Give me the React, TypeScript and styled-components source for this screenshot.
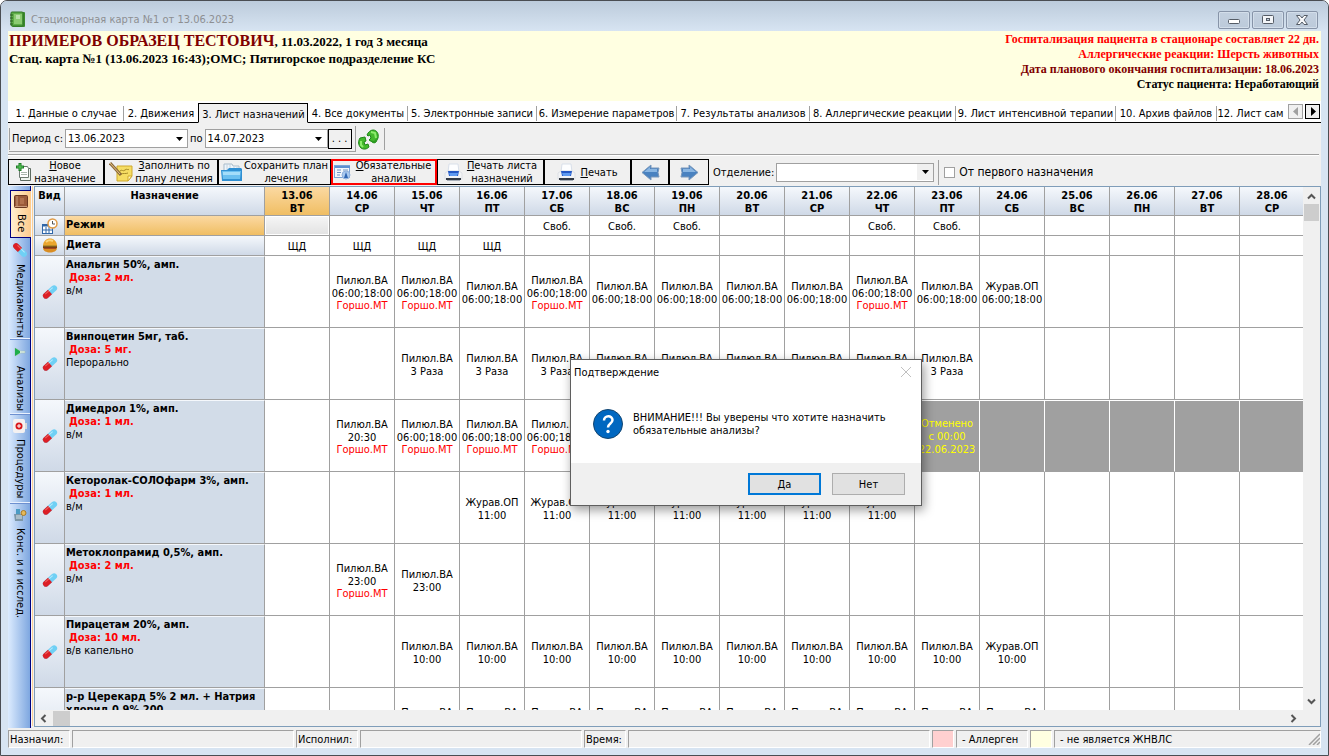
import React from 'react';
import styled, { createGlobalStyle, css } from 'styled-components';

const ui = '"DejaVu Sans Condensed", "DejaVu Sans", sans-serif';

const GlobalStyle = createGlobalStyle`
  * { box-sizing: border-box; }
  body { margin: 0; font: 11px/13px ${ui}; color: #000; background: #fff; }
  button, input, select { font: inherit; color: inherit; margin: 0; padding: 0; border: 0; border-radius: 0; background: none; }
  svg { display: block; flex: none; }
`;

/* ---------- window frame ---------- */

const Frame = styled.div`
  position: relative;
  display: flex;
  flex-direction: column;
  height: 100vh;
  border: 1px solid #4a4d52;
  border-radius: 7px 7px 0 0;
  background: #d7e4f2;
  padding: 0 7px 7px;
  overflow: hidden;
`;

const TitleBar = styled.header`
  display: flex;
  align-items: center;
  gap: 5px;
  height: 30px;
  flex: none;
  margin: 0 -7px;
  padding: 7px 10px 0 9px;
  background: linear-gradient(#bccbdb, #d7e4f2);
  color: #8d8f92;
`;

const Title = styled.h1`
  flex: 1;
  margin: 0;
  font-size: 11px;
  font-weight: 400;
`;

const FrameButtons = styled.div`
  display: flex;
  gap: 2px;
`;

const FrameButton = styled.button`
  display: grid;
  place-items: center;
  width: 32px;
  height: 18px;
  border: 1px solid #8794a8;
  border-radius: 2px;
  box-shadow: inset 0 0 0 1px #d3deea;
  background: linear-gradient(#c3d0df, #bccada);
`;

/* ---------- patient header ---------- */

const Patient = styled.section`
  display: flex;
  justify-content: space-between;
  height: 70px;
  flex: none;
  padding: 1px 2px 0 1px;
  background: #ffffe1;
  font: bold 12px/15px "Liberation Serif", serif;
`;

const PatientName = styled.div`
  font-size: 13px;
  line-height: 18px;
  strong { font-size: 16px; color: #800000; }
`;

const PatientCard = styled.div`
  font-size: 13px;
  line-height: 15px;
`;

const Notices = styled.div`
  text-align: right;
`;

const Notice = styled.div<{ $color: string }>`
  color: ${(p) => p.$color};
`;

/* ---------- tabs ---------- */

const TabBar = styled.nav`
  display: flex;
  align-items: flex-end;
  height: 22px;
  flex: none;
  background: #fff;
`;

const TabList = styled.div`
  display: flex;
  align-items: flex-end;
  flex: 1;
  min-width: 0;
  overflow: hidden;
`;

const Tab = styled.button<{ $width: number; $active?: boolean; $line?: boolean }>`
  flex: none;
  width: ${(p) => p.$width}px;
  height: 20px;
  padding-top: 2px;
  white-space: nowrap;
  border-bottom: 1px solid #000;
  ${(p) =>
    p.$active &&
    css`
      border: 1px solid #000;
      border-bottom-color: #f0f0f0;
      background: #f0f0f0;
    `}
  span {
    display: block;
    border-left: 1px solid ${(p) => (p.$line ? '#a0a0a0' : 'transparent')};
    line-height: 15px;
  }
`;

const TabFiller = styled.div`
  flex: 1;
  border-bottom: 1px solid #000;
`;

const TabScroll = styled.div`
  display: flex;
  gap: 2px;
  height: 22px;
  padding: 3px 1px 0 4px;
  border-bottom: 1px solid #000;
`;

const TabScrollButton = styled.button<{ $off?: boolean }>`
  display: grid;
  place-items: center;
  width: 15px;
  height: 15px;
  border: 1px solid ${(p) => (p.$off ? '#a0a0a0' : '#000')};
  background: #f0f0f0;
  color: ${(p) => (p.$off ? '#a0a0a0' : '#000')};
`;

/* ---------- toolbars ---------- */

const Work = styled.main`
  display: flex;
  flex-direction: column;
  flex: 1;
  min-height: 0;
  background: #f0f0f0;
`;

const PeriodBar = styled.div`
  display: flex;
  align-items: center;
  height: 32px;
  flex: none;
  margin-right: 2px;
  padding: 1px 0 0 1px;
  border-bottom: 1px solid #a0a0a0;
  box-shadow: 0 1px #fff;
`;

const PeriodGroup = styled.div`
  display: flex;
  align-items: center;
  gap: 2px;
  height: 26px;
  padding: 0 3px 0 0;
  border-right: 1px solid #a0a0a0;
  border-bottom: 1px solid #a0a0a0;
`;

const Joined = styled.span`
  display: flex;
  align-items: center;
`;

const Divider = styled.span<{ $height: number }>`
  width: 1px;
  height: ${(p) => p.$height}px;
  background: #a0a0a0;
`;

const Field = styled.span<{ $width: number; $height: number }>`
  display: flex;
  align-items: center;
  width: ${(p) => p.$width}px;
  height: ${(p) => p.$height}px;
  border: 1px solid #a0a0a0;
  background: #fff;
  input,
  select {
    flex: 1;
    min-width: 0;
    height: 100%;
    padding-left: 2px;
    appearance: none;
    outline: 0;
  }
`;

const DropButton = styled.button<{ $shaded?: boolean }>`
  display: grid;
  place-items: center;
  width: 16px;
  height: 16px;
  background: ${(p) => (p.$shaded ? '#f0f0f0' : '#fff')};
`;

const Dots = styled.button`
  width: 24px;
  height: 20px;
  border: 1px solid #000;
`;

const RefreshButton = styled.button`
  margin: 0 5px 0 2px;
`;

const ActionBar = styled.div`
  display: flex;
  align-items: center;
  height: 31px;
  flex: none;
  padding: 4px 0 1px;
`;

const Action = styled.button<{ $width: number; $marked?: boolean; $tight?: boolean }>`
  display: flex;
  align-items: center;
  justify-content: center;
  gap: ${(p) => (p.$tight ? 4 : 2)}px;
  flex: none;
  width: ${(p) => p.$width}px;
  height: 26px;
  padding: 0 ${(p) => (p.$marked ? 1 : 4)}px;
  border: ${(p) => (p.$marked ? '2px solid #f00' : '1px solid #000')};
  overflow: hidden;
`;

const ActionText = styled.span<{ $fill?: boolean }>`
  flex: ${(p) => (p.$fill ? 1 : 'none')};
  line-height: 13px;
  white-space: nowrap;
`;

const DeptLabel = styled.label`
  display: flex;
  align-items: center;
  gap: 2px;
  margin: 0 4px;
`;

const CheckLabel = styled.label`
  display: flex;
  align-items: center;
  gap: 4px;
  margin-left: 5px;
  font-size: 12px;
  input {
    appearance: none;
    width: 11px;
    height: 11px;
    border: 1px solid #a0a0a0;
    background: #fff;
  }
`;

/* ---------- category strip ---------- */

const Body = styled.div`
  display: flex;
  flex: 1;
  min-height: 0;
`;

const Strip = styled.nav`
  display: flex;
  flex-direction: column;
  flex: none;
  width: 23px;
  padding: 4px 0 0 2px;
  border-right: 1px solid #000080;
  background: linear-gradient(90deg, #dcebfe, #7ea7e0);
`;

const StripEdge = styled.div`
  flex: none;
  width: 3px;
  margin-bottom: 2px;
  background: linear-gradient(90deg, #f7f7f7 1px, #fcc98a 1px, #fdd6a6 2px, #f0f0f0 2px);
`;

const StripTab = styled.button<{ $height: number; $active?: boolean }>`
  position: relative;
  display: flex;
  flex-direction: column;
  align-items: center;
  gap: 6px;
  flex: none;
  height: ${(p) => p.$height}px;
  padding-top: 4px;
  white-space: nowrap;
  border-bottom: 1px solid #6d90d0;
  box-shadow: inset 0 -1px #e8f1fe;
  &:last-child { border-bottom: 0; box-shadow: none; }
  span { writing-mode: vertical-rl; }
  ${(p) =>
    p.$active &&
    css`
      margin-right: -1px;
      border: 1px solid #000080;
      border-right: 0;
      background: linear-gradient(90deg, #ffefd2, #fdcb8c);
      box-shadow: none;
    `}
`;

/* ---------- grid ---------- */

const GridBox = styled.div`
  display: grid;
  grid-template-columns: minmax(0, 1fr) 17px;
  grid-template-rows: minmax(0, 1fr) 16px;
  flex: 1;
  min-width: 0;
  margin: 0 0 1px;
  border: 1px solid #7f9db9;
  background: #f0f0f0;
`;

const Viewport = styled.div`
  overflow: hidden;
  background: #fff;
`;

const Sheet = styled.table`
  width: 1270px;
  table-layout: fixed;
  border-collapse: separate;
  border-spacing: 0;
  col.kind { width: 30px; }
  col.name { width: 200px; }
`;

const cellBase = css`
  padding: 0;
  border-right: 1px solid #a0a0a0;
  border-bottom: 1px solid #a0a0a0;
`;

const HeadCell = styled.th<{ $hot?: boolean }>`
  ${cellBase}
  height: 29px;
  padding-top: 2px;
  vertical-align: top;
  background: ${(p) => (p.$hot ? 'linear-gradient(#fbd9a2, #f0be63)' : 'linear-gradient(#f5f8fc, #cfd9e7)')};
`;

const KindCell = styled.td<{ $height: number }>`
  ${cellBase}
  height: ${(p) => p.$height}px;
  background: linear-gradient(#f5f8fc, #cfd9e7);
  svg { margin: 0 auto; }
`;

const NameCell = styled.th<{ $look: 'hot' | 'plain' | 'drug' }>`
  ${cellBase}
  border-top: ${(p) => (p.$look === 'drug' ? '1px solid #f5f8fc' : 0)};
  padding: ${(p) => (p.$look === 'drug' ? 1 : 2)}px 0 0 1px;
  text-align: left;
  vertical-align: top;
  background: ${(p) =>
    p.$look === 'hot'
      ? 'linear-gradient(#fbd9a2, #f0be63)'
      : p.$look === 'plain'
        ? 'linear-gradient(#f5f8fc, #cfd9e7)'
        : '#d2dce8'};
`;

const Dose = styled.div`
  padding-left: 3px;
  color: #f00;
`;

const Route = styled.div`
  font-weight: 400;
`;

const DayCell = styled.td<{ $picked?: boolean; $off?: boolean }>`
  ${cellBase}
  padding-top: 2px;
  text-align: center;
  white-space: nowrap;
  ${(p) =>
    p.$picked &&
    css`
      background: linear-gradient(#f6f6f6, #e2e2e2);
      box-shadow: inset 0 0 0 1px #fff;
    `}
  ${(p) =>
    p.$off &&
    css`
      padding-top: 0;
      color: #ff0;
      background: #a0a0a0;
      border-right-color: #fff;
      border-top: 1px solid #fff;
    `}
`;

const Nurse = styled.div`
  line-height: 11px;
  color: #f00;
`;

const VScroll = styled.div`
  display: flex;
  flex-direction: column;
  align-items: center;
  gap: 3px;
  padding: 5px 0 4px;
`;

const HScroll = styled.div`
  display: flex;
  align-items: center;
  gap: 5px;
  padding: 0 5px 0 4px;
`;

const Thumb = styled.span<{ $long?: boolean }>`
  width: ${(p) => (p.$long ? 17 : 15)}px;
  height: ${(p) => (p.$long ? 15 : 17)}px;
  background: #cdcdcd;
`;

const Gap = styled.span`
  flex: 1;
`;

/* ---------- status bar ---------- */

const StatusBar = styled.footer`
  display: flex;
  gap: 2px;
  height: 20px;
  flex: none;
  padding-top: 2px;
  background: #f0f0f0;
`;

const Panel = styled.div<{ $width?: number; $fill?: string; $indent?: boolean }>`
  display: flex;
  align-items: center;
  justify-content: space-between;
  flex: ${(p) => (p.$width ? `none` : 1)};
  width: ${(p) => (p.$width ? `${p.$width}px` : 'auto')};
  padding-left: ${(p) => (p.$indent ? 5 : 1)}px;
  border: 1px solid #fff;
  border-top-color: #a0a0a0;
  border-left-color: #a0a0a0;
  background: ${(p) => p.$fill || '#f0f0f0'};
  white-space: nowrap;
`;

/* ---------- dialog ---------- */

const Dialog = styled.div`
  position: absolute;
  left: 569px;
  top: 358px;
  width: 352px;
  border: 1px solid #5f5f5f;
  background: #fff;
  box-shadow: 2px 4px 10px rgba(0, 0, 0, 0.4);
`;

const DialogHead = styled.div`
  display: flex;
  align-items: center;
  justify-content: space-between;
  height: 24px;
  padding: 0 9px 0 3px;
`;

const DialogBody = styled.div`
  display: flex;
  align-items: center;
  gap: 10px;
  height: 79px;
  padding: 0 22px;
  p { margin: 0; }
`;

const DialogFoot = styled.div`
  display: flex;
  justify-content: flex-end;
  gap: 11px;
  padding: 10px 16px;
  background: #f0f0f0;
`;

const DialogButton = styled.button<{ $primary?: boolean }>`
  width: 73px;
  height: 22px;
  border: ${(p) => (p.$primary ? '2px solid #0078d7' : '1px solid #adadad')};
  background: #e1e1e1;
`;

/* ---------- drawings ---------- */

const BookIcon = () => (
  <svg width="16" height="17" viewBox="0 0 16 17">
    <rect x="2" y="1" width="13" height="15" rx="1" fill="#3d8a2f" />
    <rect x="1" y="1" width="12" height="14" rx="1" fill="#5fae48" stroke="#2f7424" />
    <rect x="4" y="3" width="8" height="10" fill="#8bcb72" />
    <path d="M6 5h4M6 7h4" stroke="#e9f7e2" />
    <path d="M0 4h3M0 7h3M0 10h3M0 13h3" stroke="#2b5a22" />
  </svg>
);
const MinIcon = () => (
  <svg width="12" height="8"><rect x=".5" y="3.500" width="11" height="4" rx="1" fill="#fff" stroke="#555c66" /></svg>
);
const MaxIcon = () => (
  <svg width="12" height="9">
    <rect x=".5" y=".5" width="11" height="8" rx="1" fill="#f3f5f8" stroke="#555c66" />
    <rect x="4.500" y="3.500" width="3" height="2" fill="#c3d0df" stroke="#555c66" />
  </svg>
);
const CloseIcon = () => (
  <svg width="12" height="10" viewBox="0 0 12 10">
    <path d="M.5 .5h3.500L6 3 8 .5h3.500L8 5l3.500 4.500H8L6 7 4 9.500H.5L4 5z" fill="#f8f9fb" stroke="#555c66" />
  </svg>
);
const Tri = ({ dir }: { dir: 'l' | 'r' | 'd' }) =>
  dir === 'd' ? (
    <svg width="7" height="4"><path d="M0 0h7L3.500 4z" fill="#000" /></svg>
  ) : (
    <svg width="6" height="9"><path d={dir === 'l' ? 'M5 0v9L0 4.500z' : 'M1 0v9l5-4.500z'} fill="currentColor" /></svg>
  );
const Chevron = ({ d }: { d: string }) => (
  <svg width="9" height="9" viewBox="0 0 9 9"><path d={d} fill="none" stroke="#555" strokeWidth="2" /></svg>
);
const RefreshIcon = () => (
  <svg width="21" height="21" viewBox="0 0 21 21">
    <path d="M9 6C10 3 13 1 15 1c4 0 6 4 5 8l-2 4-2 1-5-3 2-2-1-3-2 1z" fill="#43b92c" stroke="#1e8518" />
    <path d="M11 11l5 1 3-3-2 5-2 0z" fill="#2c9a20" />
    <path d="M2 9l5-1 1 4-2 1 1 3 3-1 1 3c-2 2-5 3-8 1C0 16 0 12 2 9z" fill="#43b92c" stroke="#1e8518" />
    <path d="M3 12v4l2 2M13 3l4 1 1 5" fill="none" stroke="#8cec6c" strokeWidth="2" />
  </svg>
);
const NewDocIcon = () => (
  <svg width="16" height="18" viewBox="0 0 16 18">
    <path d="M5.500 5.500h9v12h-10v-6" fill="#eef3ee" stroke="#5d6b60" />
    <path d="M3.500 3.500h8l1 2v9h-9z" fill="#fff" stroke="#6d7a70" />
    <path d="M5 9.500h6M5 11.500h6" stroke="#a9b5ac" />
    <path d="M4 0v8M0 4h8" stroke="#1d7a25" strokeWidth="3" />
    <path d="M4 1v6M1 4h6" stroke="#5ccf5c" />
  </svg>
);
const NoteIcon = () => (
  <svg width="24" height="20" viewBox="0 0 24 20">
    <path d="M8 4h15v10l-4 5H8z" fill="#f5dd63" stroke="#cfa92c" />
    <path d="M19 19v-5h4z" fill="#fff6bd" stroke="#cfa92c" />
    <path d="M11 9c2-2 3 1 5-1s3 1 4-1M12 12c2-1 5 0 7-1" fill="none" stroke="#a58a27" />
    <path d="M1 1l11 12" stroke="#8a6a3a" strokeWidth="3" />
    <path d="M1 1l10 11" stroke="#e8c283" />
  </svg>
);
const FolderIcon = () => (
  <svg width="21" height="20" viewBox="0 0 21 20">
    <path d="M3 9V2h8l1 2h6v6z" fill="#eef5fb" stroke="#a9bccb" />
    <path d="M6 2v7M9 2v8M13 5v5M16 5v5" stroke="#c5d2dc" />
    <path d="M0 8h6l2-2h12l1 1v12H1z" fill="#2f8fd2" />
    <path d="M1 9h19l-1 8H2z" fill="#6cc0f0" />
    <path d="M2 10h17v3H2z" fill="#a4ddfa" />
  </svg>
);
const AnalysisIcon = () => (
  <svg width="17" height="16" viewBox="0 0 17 16">
    <rect x=".5" y="1.500" width="15" height="12" fill="#f2f7fd" stroke="#7ba3d6" />
    <path d="M1 3h15" stroke="#5d8fd0" strokeWidth="2" />
    <path d="M3 6h4M3 8.500h4M3 11h3M9 6h5M9 8.500h3" stroke="#6f93c2" />
    <circle cx="12" cy="11" r="4" fill="#a9c8ee" stroke="#8fb0dc" />
    <path d="M12 8l2 6h-4z" fill="#2f66b3" />
  </svg>
);
const PrinterIcon = () => (
  <svg width="19" height="19" viewBox="0 0 19 19">
    <path d="M5 1h9l1 8H4z" fill="#fdfeff" stroke="#d9e0ea" />
    <path d="M1 10l3-2h11l3 2v6H1z" fill="#f3f4f6" stroke="#dde0e5" />
    <path d="M4 8h11l-1 5H5z" fill="#2458c4" />
    <path d="M5 10h9l-1 3H6z" fill="#5f9af0" />
    <path d="M2 16h15" stroke="#333b46" strokeWidth="2" />
    <path d="M3 17.500h13" stroke="#a8afb8" />
  </svg>
);
const BlueArrow = ({ right }: { right?: boolean }) => (
  <svg width="19" height="17" viewBox="0 0 19 17">
    <path d={right ? 'M1 4h8V1l9 7.500L9 16v-3H1l1-4.500z' : 'M18 4h-8V1L1 8.500 10 16v-3h8l-1-4.500z'} fill="#4a82c0" stroke="#7a98bb" />
    <path d={right ? 'M3 5h7V3l6 5H3z' : 'M16 5H9V3L3 8h13z'} fill="#8ab6e2" />
  </svg>
);
const BrownBook = () => (
  <svg width="14" height="13"><rect x=".5" y=".5" width="13" height="12" rx="1" fill="#9a5a3a" stroke="#6b3822" /><path d="M3 1v10M1 11.500h12" stroke="#c99b7c" /><rect x="6" y="3" width="4" height="6" fill="#b0714e" /></svg>
);
const Pill = ({ flip }: { flip?: boolean }) => (
  <svg width="16" height="16" viewBox="0 0 16 16">
    <g transform={flip ? 'rotate(45 8 8)' : 'rotate(-42 8 8)'}>
      <rect x="-.5" y="5" width="17" height="6" rx="3" fill="#6fd0f5" />
      <path d="M8 5H2.500a3 3 0 0 0 0 6H8z" fill="#dc1f26" />
      <path d="M3 6.500h5" stroke="#f0605c" />
      <path d="M8 6.500h5" stroke="#b8eafc" />
    </g>
  </svg>
);
const FlaskIcon = () => (
  <svg width="12" height="16" viewBox="0 0 12 16"><path d="M1 4l6 3h4v2H7l-6 3z" fill="#d9ede3" stroke="#9fb9ae" strokeWidth=".5" /><path d="M1 4l5 3v2l-5 3z" fill="#1fae4b" /></svg>
);
const MedKit = () => (
  <svg width="14" height="14"><rect x="12" y="4" width="2" height="6" fill="#d9d9d9" /><rect width="12" height="14" rx="2" fill="#f4f1f1" /><circle cx="6" cy="7" r="3.500" fill="#d8151b" /><path d="M6 5v4M4 7h4" stroke="#fff" /></svg>
);
const DoctorIcon = () => (
  <svg width="14" height="14"><path d="M1 6h9v7H2z" fill="#7d97a8" /><path d="M3 1h4v5H3z" fill="#4b9cc4" /><circle cx="10.500" cy="5" r="2.500" fill="#e5b95b" stroke="#a87926" /><path d="M3 8h6M3 10h6" stroke="#d8e4ea" /></svg>
);
const RegimeIcon = () => (
  <svg width="16" height="16" viewBox="0 0 16 16">
    <rect x=".5" y="6.500" width="10" height="9" fill="#fff" stroke="#2f66a8" />
    <path d="M1 7.500h9" stroke="#2f66a8" strokeWidth="2" />
    <path d="M4 9v6M7 9v6M1 12h9" stroke="#2f66a8" />
    <circle cx="10.500" cy="5.500" r="4.500" fill="#fff" stroke="#e09a45" strokeWidth="1.500" />
    <path d="M10.500 3v3H13" fill="none" stroke="#555" />
  </svg>
);
const BurgerIcon = () => (
  <svg width="16" height="15" viewBox="0 0 16 15">
    <path d="M1 8C1-2 15-2 15 8z" fill="#eaa52e" />
    <path d="M4 4c2-2 5-2 7-1" fill="none" stroke="#fbd57c" strokeWidth="2" />
    <path d="M1 8h14v2H1z" fill="#7a3d16" />
    <path d="M1 8h14" stroke="#8f7a25" />
    <path d="M1 10h14c0 6-14 6-14 0z" fill="#d98d23" />
    <path d="M2 10.500h12" stroke="#a8481e" />
  </svg>
);
const QuestionIcon = () => (
  <svg width="30" height="30" viewBox="0 0 30 30">
    <circle cx="15" cy="15" r="14.500" fill="#0067c0" stroke="#14456f" />
    <path d="M11 11.500c0-5.500 8.500-5.500 8.500-.5 0 3.500-4.500 3.500-4.500 7.500" fill="none" stroke="#fff" strokeWidth="2.500" />
    <circle cx="15" cy="22.500" r="1.700" fill="#fff" />
  </svg>
);
const GripIcon = () => (
  <svg width="12" height="12"><path d="M1 12L12 1M5 12l7-7M9 12l3-3" stroke="#a0a0a0" strokeWidth="1.500" /></svg>
);

/* ---------- data ---------- */

const tabs: [string, number][] = [
  ['1. Данные о случае', 115],
  ['2. Движения', 75],
  ['3. Лист назначений', 110],
  ['4. Все документы', 99],
  ['5. Электронные записи', 129],
  ['6. Измерение параметров', 140],
  ['7. Результаты анализов', 133],
  ['8. Аллергические реакции', 146],
  ['9. Лист интенсивной терапии', 160],
  ['10. Архив файлов', 101],
  ['12. Лист сам', 68],
];

const weekdays = ['ВТ', 'СР', 'ЧТ', 'ПТ', 'СБ', 'ВС', 'ПН'];
const days = Array.from({ length: 16 }, (_, i) => ({ date: `${13 + i}.06`, week: weekdays[i % 7] }));

type Entry = { who: string; when: string; nurse?: string } | 'off' | 'cancelled';
type Drug = { name: string; dose: string; route: string; plan: Record<number, Entry> };

const P = 'Пилюл.ВА';
const J = 'Журав.ОП';
const G = 'Горшо.МТ';

const span = (from: number, to: number, entry: Entry): Record<number, Entry> =>
  Object.fromEntries(Array.from({ length: to - from + 1 }, (_, i) => [from + i, entry]));

const twice = { who: P, when: '06:00;18:00' };
const twiceG = { ...twice, nurse: G };

const drugs: Drug[] = [
  {
    name: 'Анальгин 50%, амп.', dose: '2 мл.', route: 'в/м',
    plan: { ...span(14, 23, twice), 14: twiceG, 15: twiceG, 17: twiceG, 22: twiceG, 24: { who: J, when: '06:00;18:00' } },
  },
  { name: 'Винпоцетин 5мг, таб.', dose: '5 мг.', route: 'Перорально', plan: span(15, 23, { who: P, when: '3 Раза' }) },
  {
    name: 'Димедрол 1%, амп.', dose: '1 мл.', route: 'в/м',
    plan: { 14: { who: P, when: '20:30', nurse: G }, ...span(15, 17, twiceG), 23: 'cancelled', ...span(24, 28, 'off') },
  },
  { name: 'Кеторолак-СОЛОфарм 3%, амп.', dose: '1 мл.', route: 'в/м', plan: span(16, 22, { who: J, when: '11:00' }) },
  {
    name: 'Метоклопрамид 0,5%, амп.', dose: '2 мл.', route: 'в/м',
    plan: { 14: { who: P, when: '23:00', nurse: G }, 15: { who: P, when: '23:00' } },
  },
  {
    name: 'Пирацетам 20%, амп.', dose: '10 мл.', route: 'в/в капельно',
    plan: { ...span(15, 23, { who: P, when: '10:00' }), 24: { who: J, when: '10:00' } },
  },
  {
    name: 'р-р Церекард 5% 2 мл. + Натрия хлорид 0,9% 200', dose: '2 мл.', route: 'в/в капельно',
    plan: span(15, 24, { who: P, when: '10:00', nurse: G }),
  },
];

const DrugDay = ({ entry }: { entry?: Entry }) => {
  if (!entry) return <DayCell />;
  if (entry === 'off') return <DayCell $off />;
  if (entry === 'cancelled')
    return (
      <DayCell $off>
        Отменено<br />с 00:00<br />22.06.2023
      </DayCell>
    );
  return (
    <DayCell>
      <div>{entry.who}</div>
      <div>{entry.when}</div>
      {entry.nurse && <Nurse>{entry.nurse}</Nurse>}
    </DayCell>
  );
};

const freeDays = [4, 5, 6, 9, 10];

export default function App() {
  return (
    <>
      <GlobalStyle />
      <Frame>
        <TitleBar>
          <BookIcon />
          <Title>Стационарная карта №1 от 13.06.2023</Title>
          <FrameButtons>
            <FrameButton aria-label="Свернуть"><MinIcon /></FrameButton>
            <FrameButton aria-label="Развернуть"><MaxIcon /></FrameButton>
            <FrameButton aria-label="Закрыть"><CloseIcon /></FrameButton>
          </FrameButtons>
        </TitleBar>

        <Patient>
          <div>
            <PatientName><strong>ПРИМЕРОВ ОБРАЗЕЦ ТЕСТОВИЧ</strong>, 11.03.2022, 1 год 3 месяца</PatientName>
            <PatientCard>Стац. карта №1 (13.06.2023 16:43);ОМС; Пятигорское подразделение КС</PatientCard>
          </div>
          <Notices>
            <Notice $color="#ff0000">Госпитализация пациента в стационаре составляет 22 дн.</Notice>
            <Notice $color="#ff0000">Аллергические реакции: Шерсть животных</Notice>
            <Notice $color="#800000">Дата планового окончания госпитализации: 18.06.2023</Notice>
            <Notice $color="#000000">Статус пациента: Неработающий</Notice>
          </Notices>
        </Patient>

        <TabBar>
          <TabList>
            {tabs.map(([label, width], i) => (
              <Tab key={label} $width={width} $active={i === 2} $line={i === 1 || i > 3}>
                <span>{label}</span>
              </Tab>
            ))}
            <TabFiller />
          </TabList>
          <TabScroll>
            <TabScrollButton $off aria-label="Назад"><Tri dir="l" /></TabScrollButton>
            <TabScrollButton aria-label="Вперёд"><Tri dir="r" /></TabScrollButton>
          </TabScroll>
        </TabBar>

        <Work>
          <PeriodBar>
            <PeriodGroup>
              <Divider $height={22} />
              <label htmlFor="from">Период с:</label>
              <Field $width={123} $height={19}>
                <input id="from" defaultValue="13.06.2023" />
                <DropButton aria-label="Выбрать дату начала"><Tri dir="d" /></DropButton>
              </Field>
              <label htmlFor="to">по</label>
              <Joined>
                <Field $width={123} $height={19}>
                  <input id="to" defaultValue="14.07.2023" />
                  <DropButton aria-label="Выбрать дату окончания"><Tri dir="d" /></DropButton>
                </Field>
                <Dots>. . .</Dots>
              </Joined>
            </PeriodGroup>
            <RefreshButton aria-label="Обновить"><RefreshIcon /></RefreshButton>
            <Divider $height={22} />
          </PeriodBar>

          <ActionBar>
            <Action $width={96}><NewDocIcon /><ActionText><u>Н</u>овое<br />назначение</ActionText></Action>
            <Action $width={114}><NoteIcon /><ActionText $fill><u>З</u>аполнить по<br />плану лечения</ActionText></Action>
            <Action $width={113}><FolderIcon /><ActionText $fill>Сохранить план<br />лечения</ActionText></Action>
            <Action $width={106} $marked><AnalysisIcon /><ActionText $fill><u>О</u>бязательные<br />анализы</ActionText></Action>
            <Action $width={107} $tight><PrinterIcon /><ActionText><u>П</u>ечать листа<br />назначений</ActionText></Action>
            <Action $width={87} $tight><PrinterIcon /><ActionText><u>П</u>ечать</ActionText></Action>
            <Action $width={38} aria-label="Раньше"><BlueArrow /></Action>
            <Action $width={40} aria-label="Позже"><BlueArrow right /></Action>
            <DeptLabel>
              Отделение:
              <Field $width={158} $height={19}>
                <select defaultValue=""><option value="" /></select>
                <DropButton as="span" $shaded><Tri dir="d" /></DropButton>
              </Field>
            </DeptLabel>
            <Divider $height={25} />
            <CheckLabel><input type="checkbox" />От первого назначения</CheckLabel>
          </ActionBar>

          <Body>
            <Strip>
              <StripTab $height={48} $active><BrownBook /><span>Все</span></StripTab>
              <StripTab $height={102}><Pill flip /><span>Медикаменты</span></StripTab>
              <StripTab $height={75}><FlaskIcon /><span>Анализы</span></StripTab>
              <StripTab $height={89}><MedKit /><span>Процедуры</span></StripTab>
              <StripTab $height={120}><DoctorIcon /><span>Конс. и и исслед.</span></StripTab>
            </Strip>
            <StripEdge />
            <GridBox>
              <Viewport>
                <Sheet>
                  <colgroup>
                    <col className="kind" />
                    <col className="name" />
                    {days.map((d) => <col key={d.date} />)}
                  </colgroup>
                  <thead>
                    <tr>
                      <HeadCell>Вид</HeadCell>
                      <HeadCell>Назначение</HeadCell>
                      {days.map((d, i) => (
                        <HeadCell key={d.date} $hot={i === 0}>{d.date}<br />{d.week}</HeadCell>
                      ))}
                    </tr>
                  </thead>
                  <tbody>
                    <tr>
                      <KindCell $height={20}><RegimeIcon /></KindCell>
                      <NameCell $look="hot">Режим</NameCell>
                      {days.map((d, i) => (
                        <DayCell key={d.date} $picked={i === 0}>{freeDays.includes(i) ? 'Своб.' : null}</DayCell>
                      ))}
                    </tr>
                    <tr>
                      <KindCell $height={20}><BurgerIcon /></KindCell>
                      <NameCell $look="plain">Диета</NameCell>
                      {days.map((d, i) => <DayCell key={d.date}>{i < 4 ? 'ЩД' : null}</DayCell>)}
                    </tr>
                    {drugs.map((drug) => (
                      <tr key={drug.name}>
                        <KindCell $height={72}><Pill /></KindCell>
                        <NameCell $look="drug">
                          {drug.name}
                          <Dose>Доза: {drug.dose}</Dose>
                          <Route>{drug.route}</Route>
                        </NameCell>
                        {days.map((d, i) => <DrugDay key={d.date} entry={drug.plan[13 + i]} />)}
                      </tr>
                    ))}
                  </tbody>
                </Sheet>
              </Viewport>
              <VScroll>
                <Chevron d="M1 6.500L4.500 3 8 6.500" />
                <Thumb />
                <Gap />
                <Chevron d="M1 2.500L4.500 6 8 2.500" />
              </VScroll>
              <HScroll>
                <Chevron d="M6.500 1L3 4.500 6.500 8" />
                <Thumb $long />
                <Gap />
                <Chevron d="M2.500 1L6 4.500 2.500 8" />
              </HScroll>
            </GridBox>
          </Body>
        </Work>

        <StatusBar>
          <Panel $width={62}>Назначил:</Panel>
          <Panel $width={222} />
          <Panel $width={62}>Исполнил:</Panel>
          <Panel $width={222} />
          <Panel $width={42}>Время:</Panel>
          <Panel $width={302} />
          <Panel $width={22} $fill="#ffd0d0" />
          <Panel $width={72} $indent>- Аллерген</Panel>
          <Panel $width={22} $fill="#ffffe1" />
          <Panel $indent>- не является ЖНВЛС<GripIcon /></Panel>
        </StatusBar>

        <Dialog role="dialog" aria-labelledby="dialog-title">
          <DialogHead>
            <span id="dialog-title">Подтверждение</span>
            <button aria-label="Закрыть окно">
              <svg width="12" height="12"><path d="M1 1l10 10M11 1L1 11" stroke="#c0c0c0" /></svg>
            </button>
          </DialogHead>
          <DialogBody>
            <QuestionIcon />
            <p>ВНИМАНИЕ!!! Вы уверены что хотите назначить обязательные анализы?</p>
          </DialogBody>
          <DialogFoot>
            <DialogButton $primary>Да</DialogButton>
            <DialogButton>Нет</DialogButton>
          </DialogFoot>
        </Dialog>
      </Frame>
    </>
  );
}
